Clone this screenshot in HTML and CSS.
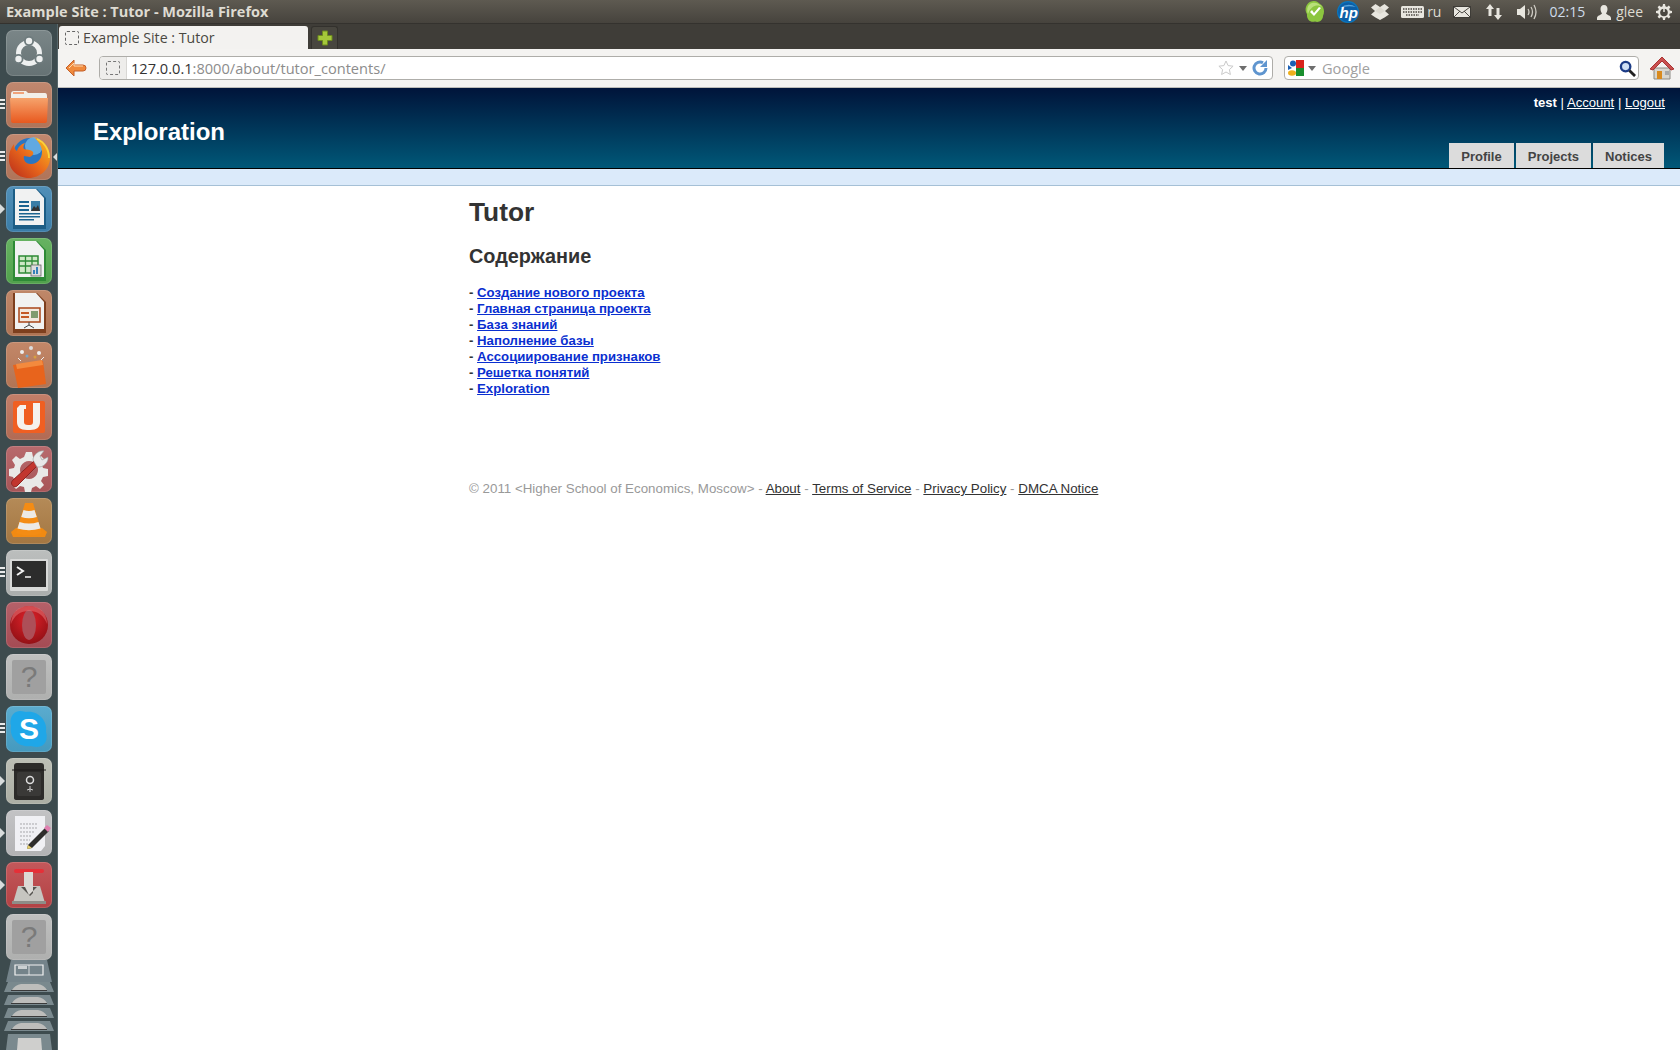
FILE: index.html
```html
<!DOCTYPE html>
<html lang="ru">
<head>
<meta charset="utf-8">
<title>Example Site : Tutor - Mozilla Firefox</title>
<link rel="stylesheet" href="styles.css">
</head>
<body>
<header class="panel">
  <div class="panel-title">Example Site : Tutor - Mozilla Firefox</div>
  <div class="tray">
    <svg class="ti w20" viewBox="0 0 20 22"><path d="M6 .5c4-1.500 7 .5 9 2.500 4 2 5 8 3 12 0 4-4 7-8 5.500C5 22 1.500 18 2 13-1 9 1 2.500 6 .5z" fill="#8cc63f"/><path d="M3 13C1 8 3 3 7 2c4-1 8 1 10 4-4-3-11-2-14 7z" fill="#b9e07a"/><path d="M5 11l4 4 7-8-2-1-5 6-2-3z" fill="#fff"/></svg>
    <svg class="ti w22" viewBox="0 0 22 22"><circle cx="11" cy="11" r="11" fill="#0a76bd"/><circle cx="11" cy="11" r="9.800" fill="#0c5ea6"/><path d="M3 7q8-6 16-1-8-2-16 1z" fill="#5aa6dc"/><text class="hp" x="2.500" y="16.500">hp</text></svg>
    <svg class="ti w18" viewBox="0 0 18 16"><path d="M0 3.500L4.500 0 9 3l4.500-3L18 3.500 14 7l4 3.500-4.500 3L9 16l-4.500-2.500L0 10.500 4 7z" fill="#e8e6df"/><path d="M9 3L4 7l5 3 5-3z" fill="#dcd9d0"/></svg>
    <div class="tray-group g3">
      <svg class="ti w23" viewBox="0 0 23 12"><rect width="23" height="12" rx="1.500" fill="#e8e6df"/><path d="M2 3h19M2 6h19M5 9h13" stroke="#4b4842" stroke-width="1.400" stroke-dasharray="1.500 1"/></svg>
      <span class="tray-text">ru</span>
    </div>
    <svg class="ti w18" viewBox="0 0 18 12"><rect x=".5" y=".5" width="17" height="11" fill="#e8e6df" stroke="#3e3c37"/><path d="M1 1l8 6 8-6M1 11l6-6M17 11l-6-6" fill="none" stroke="#4b4842"/></svg>
    <svg class="ti w18 m2" viewBox="0 0 18 16"><path d="M5 0l4 5H6.500v7h-3V5H1zM13 16l4-5h-2.500V4h-3v7H9z" fill="#e8e6df"/></svg>
    <svg class="ti w20 m2" viewBox="0 0 20 16"><path d="M0 5h3l5-4v14l-5-4H0z" fill="#e8e6df"/><path d="M11 5q2 3 0 6M14 3q3 5 0 10M17 1q4 7 0 14" fill="none" stroke="#cfccc4" stroke-width="1.300"/></svg>
    <span class="tray-text clock">02:15</span>
    <div class="tray-group g5">
      <svg class="ti w14" viewBox="0 0 14 15"><path d="M7 0c2.500 0 3.500 2 3.500 4S9.500 7.500 9 8.500c1 1.500 5 2 5 4.500v2H0v-2c0-2.500 4-3 5-4.500C4.500 7.500 3.500 6 3.500 4S4.500 0 7 0z" fill="#e8e6df"/></svg>
      <span class="tray-text">glee</span>
    </div>
    <svg class="ti w16 gear" viewBox="0 0 16 16"><path d="M7 0h2l.4 2.200 1.600.7L12.800 1.600l1.600 1.600-1.300 1.800.7 1.600L16 7v2l-2.200.4-.7 1.600 1.300 1.800-1.600 1.600-1.800-1.300-1.600.7L9 16H7l-.4-2.200-1.600-.7-1.800 1.300-1.600-1.600L2.900 11l-.7-1.600L0 9V7l2.200-.4.7-1.600L1.600 3.200l1.600-1.600L5 2.900l1.600-.7z" fill="#e8e6df"/><circle cx="8" cy="8.500" r="3.800" fill="#4a4740"/><path d="M8 4v4" stroke="#e8e6df" stroke-width="1.500"/></svg>
  </div>
</header>
<div class="main">
  <nav class="launcher">
    <div class="tile t-dash"><svg viewBox="0 0 46 46"><circle cx="23" cy="23" r="10.500" fill="none" stroke="#eef0f0" stroke-width="5"/><circle cx="23" cy="11" r="5" fill="#6f7c7e"/><circle cx="12.500" cy="29" r="5" fill="#6f7c7e"/><circle cx="33.500" cy="29" r="5" fill="#6f7c7e"/><circle cx="23" cy="11" r="3.200" fill="#eef0f0"/><circle cx="12.500" cy="29" r="3.200" fill="#eef0f0"/><circle cx="33.500" cy="29" r="3.200" fill="#eef0f0"/></svg></div>
    <div class="tile t-orange pips"><svg viewBox="0 0 46 46"><path d="M5 12q0-3 3-3h12l2 2h17q2 0 2 3v4H5z" fill="#f2efe9"/><path d="M7 11h11" stroke="#f08a55" stroke-width="1.500"/><path d="M4 16h38l-1 23q0 2-3 2H8q-3 0-3-2z" fill="url(#fold)"/></svg></div>
    <div class="tile t-orange pips active"><svg viewBox="0 0 46 46"><circle cx="24" cy="21" r="17" fill="#2a76c2"/><circle cx="28" cy="12" r="9" fill="#6fb6e8" opacity=".8"/><path d="M28 3c9 3 16 10 16 21 0 11-10 20-21 20C11 44 2 35 3 23c0-5 2-9 5-13 0 3 1 6 3 7 1-4 4-7 8-8-2 3-2 5-1 6 2 1 7 0 9 3 1 2-1 4-3 5l-6-1c-1 3 1 8 7 8 7 0 11-6 11-12 0-6-4-11-8-15z" fill="url(#fox)"/><path d="M31 5c7 3 12 10 12 19" fill="none" stroke="#fbd23a" stroke-width="1.800"/></svg></div>
    <div class="tile t-blue pipr"><svg viewBox="0 0 46 46"><path d="M7 3h24l9 9v31H7z" fill="#1c5d85"/><path d="M9 3h21l8 9v27H9z" fill="#f1f2f2"/><path d="M13 15h10v2H13zM13 19h10v2H13zM13 23h10v2H13zM13 27h21v1.500H13zM13 30h21v1.500H13zM13 33h15v1.500H13z" fill="#1c6490"/><rect x="25" y="15" width="9" height="10" fill="#3b7da6"/><path d="M25 25l3-5 2 2 2-3 2 6z" fill="#333"/></svg></div>
    <div class="tile t-green"><svg viewBox="0 0 46 46"><path d="M7 3h24l9 9v31H7z" fill="#2e8a36"/><path d="M9 3h21l8 9v27H9z" fill="#f1f2f2"/><rect x="13" y="18" width="19" height="17" fill="#cfe8c6" stroke="#2e8a36" stroke-width="1.500"/><path d="M13 23h19M13 28h19M19.500 18v17M26 18v17" stroke="#2e8a36" stroke-width="1.300"/><rect x="25" y="27" width="10" height="11" fill="#ddd" stroke="#666" stroke-width=".8"/><path d="M27 36v-4h2v4zM30 36v-7h2v7z" fill="#3680b8"/></svg></div>
    <div class="tile t-brown"><svg viewBox="0 0 46 46"><path d="M7 3h24l9 9v31H7z" fill="#7d3f1e"/><path d="M9 3h21l8 9v27H9z" fill="#f1f2f2"/><rect x="13" y="18" width="21" height="14" fill="#f2e9df" stroke="#a9461a" stroke-width="1.500"/><path d="M15 22h8v2h-8zM15 26h8v2h-8z" fill="#c55a25"/><rect x="25" y="21" width="7" height="7" fill="#7f9c6f"/><path d="M23 32v3l-5 3M23 35l5 3" stroke="#444" fill="none"/></svg></div>
    <div class="tile t-store"><svg viewBox="0 0 46 46"><path d="M7 23l30-4 3 23-28 4z" fill="#e8641c"/><path d="M10 22l26-4 1 5-26 4z" fill="#f38a3e"/><circle cx="16" cy="10" r="2" fill="#eee"/><circle cx="25" cy="6" r="2" fill="#ddd"/><circle cx="33" cy="11" r="2" fill="#eee"/><circle cx="21" cy="14" r="1.500" fill="#7aa7c7"/><circle cx="29" cy="15" r="1.500" fill="#d8a040"/><path d="M12 16l3 3M38 15l-3 3" stroke="#eee"/></svg></div>
    <div class="tile t-ubuntuone"><svg viewBox="0 0 46 46"><rect x="7" y="7" width="32" height="32" rx="2" fill="#f05f22"/><path d="M14 11h6v4h-2v13c0 2 1 3 4 3h2c2 0 3-1 3-3V9h7v19c0 5-3 8-10 8h-3c-7 0-10-3-10-8V14z" fill="#f5f2ee"/></svg></div>
    <div class="tile t-red"><svg viewBox="0 0 46 46"><path fill-rule="evenodd" d="M20 6h6l1 5 4 2 4-3 4 4-3 5 1 3 5 1v7l-5 1-2 4 3 4-4 4-4-3-4 2-1 4h-6l-1-5-4-1-4 3-4-4 3-4-2-4-4-1v-7l5-1 1-3-3-5 4-4 4 3 4-2zM23 15a9 9 0 1 0 .01 0z" fill="#e9e9e7"/><path d="M7 40c-2-2-2-4 0-6L28 15l4 4L11 40c-1 1-3 1-4 0z" fill="#c2362f" stroke="#8e2420"/><path d="M27 14c0-5 6-10 11-9l-4 5 2 4 6-3c1 5-5 11-11 10z" fill="#e8e8e8" stroke="#999" stroke-width=".6"/></svg></div>
    <div class="tile t-vlc"><svg viewBox="0 0 46 46"><path d="M5 34l5-4h26l5 4-2 5H7z" fill="#f18a12"/><path d="M19 5h8l9 30q-13 5-26 0z" fill="#f48c14"/><path d="M17.500 12q5.500 2 11 0l2.300 7q-7.800 2.500-15.600 0zM13.500 24q9.500 3 19 0l2 6.500q-11.500 3.500-23 0z" fill="#eceae6"/></svg></div>
    <div class="tile t-term pips"><svg viewBox="0 0 46 46"><rect x="4" y="9" width="38" height="32" rx="1" fill="#d8d9d8"/><rect x="6" y="11" width="34" height="26" fill="#2c2c2c"/><path d="M11 17l6 4-6 4" fill="none" stroke="#f2f2f2" stroke-width="2"/><path d="M19 27h6" stroke="#f2f2f2" stroke-width="1.500"/></svg></div>
    <div class="tile t-opera"><svg viewBox="0 0 46 46"><circle cx="23" cy="23" r="19" fill="url(#op)"/><ellipse cx="23" cy="23" rx="7" ry="15" fill="#ad4f58"/><path d="M5 22Q6 4 23 4t18 18Q36 9 23 9T5 22z" fill="#ee7d80" opacity=".5"/></svg></div>
    <div class="tile t-grey"><svg viewBox="0 0 46 46"><rect x="6" y="6" width="34" height="34" rx="2" fill="#a0a0a0"/><text class="qm" x="23" y="33">?</text></svg></div>
    <div class="tile t-skype pips"><svg viewBox="0 0 46 46"><path d="M14 5c3 0 5 1 6 1 12-2 22 9 20 20 2 6 0 15-9 15-3 0-5-1-6-1C13 42 3 32 5 20 3 14 6 5 14 5z" fill="#1fa7e8"/><text class="skype" x="23" y="33">S</text></svg></div>
    <div class="tile t-safe pipr"><svg viewBox="0 0 46 46"><path d="M8 8q0-3 3-3h24q3 0 3 3v32q0 2-3 2H11q-3 0-3-2z" fill="#2c2b29"/><path d="M6 12h34" stroke="#1c1b1a"/><rect x="11" y="14" width="24" height="24" rx="2" fill="#3a3937"/><circle cx="24" cy="22" r="3.500" fill="none" stroke="#ddd" stroke-width="1.500"/><path d="M24 28v6M21 32l3-1 3 1" stroke="#ccc"/></svg></div>
    <div class="tile t-notes pipr"><svg viewBox="0 0 46 46"><path d="M9 6h30v30l-4 5H9z" fill="#f0f0f4"/><path d="M14 14h18M14 18h18M14 22h14M14 26h12M14 30h10M14 34h8" stroke="#a7a7ab" stroke-dasharray="2 1"/><path d="M22 35l17-17 4 3-17 17-5 1z" fill="#2e2d2c"/><path d="M38 18l3-3 4 3-3 4z" fill="#e07fb0"/><path d="M21 39l1-4 4 3z" fill="#e8cf6a"/></svg></div>
    <div class="tile t-trans pipr"><svg viewBox="0 0 46 46"><path d="M10 7h26q2 0 2 2t-2 2H10q-2 0-2-2t2-2z" fill="#e53038"/><path d="M7 41l5-17h22l5 17z" fill="#c6c5c0"/><path d="M18 10h9v15l4 0-8 8-8-8h3z" fill="#dcdad6"/><path d="M23 33l8-8h-4v6l-3 3zM15 25h4l4 8z" fill="#55534f"/><rect x="6" y="39" width="34" height="3" fill="#8e8d88"/></svg></div>
    <div class="tile t-grey"><svg viewBox="0 0 46 46"><rect x="6" y="6" width="34" height="34" rx="2" fill="#a0a0a0"/><text class="qm" x="23" y="33">?</text></svg></div>
    <svg class="stack" viewBox="0 0 58 90">
      <path d="M11 0h36l5 22H6z" fill="#74838a"/>
      <path d="M15 5h28v10H15z" fill="none" stroke="#f2f2f2" stroke-width="1.200"/><path d="M29 5v10" stroke="#f2f2f2" stroke-width=".8"/><rect x="18" y="6" width="9" height="3" fill="#f2f2f2" opacity=".7"/>
      <path d="M8 22h42l4 10H4z" fill="#7a898e"/><path d="M12 30q3-5 9-6h17q6 1 9 6z" fill="#bdbdbb"/><path d="M11 30h36v1H11z" fill="#3a3a3a"/>
      <path d="M8 35h42l4 10H4z" fill="#7a898e"/><path d="M12 43q3-5 9-6h17q6 1 9 6z" fill="#bdbdbb"/><path d="M11 43h36v1H11z" fill="#3a3a3a"/>
      <path d="M8 48h42l4 10H4z" fill="#7a898e"/><path d="M12 56q3-5 9-6h17q6 1 9 6z" fill="#bdbdbb"/><path d="M11 56h36v1H11z" fill="#3a3a3a"/>
      <path d="M8 61h42l4 10H4z" fill="#7a898e"/><path d="M12 69q3-5 9-6h17q6 1 9 6z" fill="#bdbdbb"/><path d="M11 69h36v1H11z" fill="#3a3a3a"/>
      <path d="M8 74h42l2 16H6z" fill="#7a898e"/><path d="M18 78h23l1 12H17z" fill="#cfcfcd"/>
    </svg>
  </nav>
  <div class="browser">
    <div class="tabbar">
      <div class="tab"><span class="favicon"></span>Example Site : Tutor</div>
      <div class="newtab"><svg viewBox="0 0 16 16" width="16" height="16"><path d="M5.500 1h5v4.500H15v5h-4.500V15h-5v-4.500H1v-5h4.500z" fill="#a5c83a" stroke="#6c8a1e"/></svg></div>
    </div>
    <div class="toolbar">
      <svg class="back" viewBox="0 0 22 18"><path d="M9 1L1 9l8 8v-5h9q3 0 3-3t-3-3H9z" fill="#f08a3c" stroke="#c4602a"/><path d="M4 9l5-5v3h9" fill="none" stroke="#ffd9b0"/></svg>
      <div class="urlbar">
        <span class="urlicon"><span class="favicon"></span></span>
        <span class="url"><span class="url-host">127.0.0.1</span>:8000/about/tutor_contents/</span>
        <svg class="star" viewBox="0 0 16 16" width="16" height="16"><path d="M8 1l2.100 4.600 5 .6-3.700 3.400 1 4.900L8 12l-4.400 2.500 1-4.900L.9 6.200l5-.6z" fill="#fff" stroke="#c9c9c9"/></svg>
        <span class="drop"></span>
        <svg class="reload" viewBox="0 0 16 16" width="16" height="16"><path d="M14 8a6 6 0 1 1-3-5.200" fill="none" stroke="#5f95cf" stroke-width="3"/><path d="M15 0v7H8z" fill="#5f95cf"/></svg>
      </div>
      <div class="searchbar">
        <svg class="gicon" viewBox="0 0 16 16" width="16" height="16"><rect x="8" width="8" height="8" fill="#d8241c"/><rect x="8" y="8" width="8" height="8" fill="#1a8f2e"/><circle cx="5" cy="3.500" r="3" fill="#1a5fb4"/><path d="M0 5l4 3-4 2z" fill="#1a5fb4"/><ellipse cx="4" cy="13" rx="4" ry="2.800" fill="#efb01c"/></svg>
        <span class="drop"></span>
        <span class="search-text">Google</span>
        <svg class="mag" viewBox="0 0 18 18" width="17" height="17"><circle cx="7" cy="7" r="5" fill="#cfe0f5" stroke="#1c3c86" stroke-width="2.500"/><path d="M11 11l6 6" stroke="#222" stroke-width="3"/></svg>
      </div>
      <svg class="home" viewBox="0 0 24 24"><path d="M4 12h16v11H4z" fill="#d9d6cf" stroke="#8c8a84"/><path d="M0 13L12 1l12 12-3 1-9-9-9 9z" fill="#c9504f" stroke="#a33"/><rect x="7" y="15" width="5" height="8" fill="#d98a1e"/><rect x="15" y="15" width="4" height="4" fill="#a8a8a8"/></svg>
    </div>
    <div class="site-header">
      <h2 class="logo">Exploration</h2>
      <div class="site-right">
        <div class="account"><b>test</b> | <a href="#">Account</a> | <a href="#">Logout</a></div>
        <div class="site-tabs"><a href="#">Profile</a><a href="#">Projects</a><a href="#">Notices</a></div>
      </div>
    </div>
    <div class="subbar"></div>
    <main class="content">
      <h1>Tutor</h1>
      <h3>Содержание</h3>
      <ul class="toc">
        <li>- <a href="#">Создание нового проекта</a></li>
        <li>- <a href="#">Главная страница проекта</a></li>
        <li>- <a href="#">База знаний</a></li>
        <li>- <a href="#">Наполнение базы</a></li>
        <li>- <a href="#">Ассоциирование признаков</a></li>
        <li>- <a href="#">Решетка понятий</a></li>
        <li>- <a href="#">Exploration</a></li>
      </ul>
      <footer class="foot">© 2011 &lt;Higher School of Economics, Moscow&gt; - <a href="#">About</a> - <a href="#">Terms of Service</a> - <a href="#">Privacy Policy</a> - <a href="#">DMCA Notice</a></footer>
    </main>
  </div>
</div>
<svg class="defs" width="0" height="0">
  <defs>
    <linearGradient id="fold" x1="0" y1="0" x2="0" y2="1"><stop offset="0" stop-color="#f6a36c"/><stop offset="1" stop-color="#e8591f"/></linearGradient>
    <linearGradient id="fox" x1="1" y1="0" x2="0" y2="1"><stop offset="0" stop-color="#f9c21f"/><stop offset=".5" stop-color="#ea6a1c"/><stop offset="1" stop-color="#b8291a"/></linearGradient>
    <radialGradient id="op" cx=".5" cy=".35" r=".7"><stop offset="0" stop-color="#e0222a"/><stop offset="1" stop-color="#8e0f14"/></radialGradient>
  </defs>
</svg>
</body>
</html>
```
FILE: styles.css
```css
* { box-sizing: border-box; }
html, body { margin: 0; padding: 0; background: #fff; }
body { width: 1680px; height: 1050px; overflow: hidden; font-family: "Liberation Sans", Arial, sans-serif; position: relative; }
.defs { position: absolute; }

.panel { height: 24px; display: flex; align-items: center; justify-content: space-between; background: linear-gradient(#5e5a51, #45423c); padding: 0 8px 0 6px; box-shadow: inset 0 -1px 0 #34322e; }
.panel-title { font: 700 14.5px/22px "Open Sans", "Noto Sans", sans-serif; color: #dedbd2; white-space: nowrap; margin-top: -1px; }
.tray { display: flex; align-items: center; gap: 12px; color: #dfdcd3; }
.tray-group { display: flex; align-items: center; }
.g3 { gap: 3px; }
.g5 { gap: 5px; }
.tray-text { font: 400 14px "Open Sans", "Noto Sans", sans-serif; line-height: 24px; white-space: nowrap; }
.clock { color: #cfdcea; }
.ti { display: block; flex: none; }
.w14 { width: 14px; height: 15px; }
.w16 { width: 16px; height: 16px; }
.w18 { width: 18px; height: 16px; }
.w20 { width: 20px; height: 22px; }
.w22 { width: 22px; height: 22px; }
.w23 { width: 23px; height: 12px; }
.m2 { margin-left: 2px; }
.gear { margin-left: 1px; }
.hp { font: italic 700 15px "Liberation Sans", sans-serif; fill: #fff; }

.main { display: flex; height: 1026px; }
.launcher { width: 58px; flex: none; background: #3d4b4e; display: flex; flex-direction: column; gap: 6px; padding: 6px 0 0 6px; overflow: hidden; border-right: 1px solid #56666a; }
.tile { width: 46px; height: 46px; flex: none; border-radius: 7px; position: relative; box-shadow: inset 0 0 0 1px rgba(255,255,255,.14); }
.tile svg { display: block; width: 46px; height: 46px; border-radius: 7px; background: linear-gradient(rgba(255,255,255,.1), rgba(0,0,0,.05)); }
.t-dash { background: #6b787a; }
.t-orange { background: #b97a5e; }
.t-blue { background: #3d83b0; }
.t-green { background: #55aa50; }
.t-brown { background: #b87a58; }
.t-store { background: #bb7a58; }
.t-ubuntuone { background: #bb7058; }
.t-red { background: #b0595c; }
.t-vlc { background: #ac7d45; }
.t-term { background: #b4b7b6; }
.t-opera { background: #ad4f58; }
.t-grey { background: #b8b9b8; }
.t-skype { background: #48a2c9; }
.t-safe { background: #b5b8ad; }
.t-notes { background: #bcbcbe; }
.t-trans { background: #bc4548; }
.qm { font: 400 30px "Liberation Sans", sans-serif; fill: #7a7a7a; text-anchor: middle; }
.skype { font: 700 30px "Liberation Sans", sans-serif; fill: #fff; text-anchor: middle; }
.pips::before { content: ""; position: absolute; left: -6px; top: 17px; width: 5px; height: 2px; background: #e8eaea; box-shadow: 0 4px 0 #e8eaea, 0 8px 0 #e8eaea; }
.pipr::before { content: ""; position: absolute; left: -6px; top: 18px; border-left: 5px solid #d8dcdc; border-top: 5px solid transparent; border-bottom: 5px solid transparent; }
.active::after { content: ""; position: absolute; right: -6px; top: 18px; border-right: 5px solid #d8dcdc; border-top: 5px solid transparent; border-bottom: 5px solid transparent; }
.stack { width: 58px; height: 90px; flex: none; margin: -6px 0 0 -6px; display: block; }

.browser { flex: 1; display: flex; flex-direction: column; min-width: 0; }
.tabbar { height: 25px; background: #3f3d38; display: flex; align-items: flex-end; gap: 3px; padding-left: 1px; }
.tab { width: 249px; height: 23px; background: #f3f2f0; border-radius: 3px 3px 0 0; font: 400 14.2px "Open Sans", "Noto Sans", sans-serif; color: #4a4842; display: flex; align-items: center; gap: 4px; padding-left: 6px; }
.favicon { display: block; width: 14px; height: 14px; border: 1px dashed #666; border-radius: 2px; flex: none; }
.newtab { width: 27px; height: 23px; background: #48463f; border: 1px solid #33312d; border-bottom: 0; border-radius: 3px 3px 0 0; display: flex; align-items: center; justify-content: center; }
.toolbar { height: 39px; background: #f4f3f1; border-bottom: 1px solid #bdbcb8; display: flex; align-items: center; padding: 0 7px; }
.back { width: 22px; height: 18px; flex: none; margin-right: 12px; }
.urlbar { width: 1174px; height: 24px; background: #fff; border: 1px solid #aeada9; border-radius: 4px; display: flex; align-items: center; flex: none; overflow: hidden; }
.urlicon { width: 27px; height: 100%; background: #eeedeb; border-right: 1px solid #d8d7d4; display: flex; align-items: center; justify-content: center; }
.urlicon .favicon { border-color: #777; }
.url { flex: 1; font: 400 14.6px "Open Sans", "Noto Sans", sans-serif; color: #8c8c8c; padding-left: 4px; white-space: nowrap; }
.url-host { color: #333; }
.star { flex: none; margin-right: 5px; }
.drop { display: block; flex: none; width: 0; height: 0; border-top: 5px solid #6e6e6e; border-left: 4px solid transparent; border-right: 4px solid transparent; margin-right: 5px; }
.reload { flex: none; margin-right: 4px; }
.searchbar { width: 355px; height: 24px; margin-left: 11px; background: #fff; border: 1px solid #aeada9; border-radius: 4px; display: flex; align-items: center; flex: none; padding: 0 2px 0 3px; }
.gicon { flex: none; margin-right: 4px; }
.searchbar .drop { margin-right: 6px; }
.search-text { flex: 1; font: 400 14.6px "Open Sans", "Noto Sans", sans-serif; color: #a0a0a0; }
.mag { flex: none; }
.home { width: 24px; height: 24px; margin-left: 11px; flex: none; }

.site-header { height: 81px; background: linear-gradient(#00143a, #005878); border-bottom: 1px solid #000; display: flex; justify-content: space-between; padding: 0 15px 0 35px; color: #fff; }
.logo { margin: 30px 0 0; font-size: 24px; line-height: 28px; font-weight: 700; }
.site-right { display: flex; flex-direction: column; align-items: flex-end; justify-content: space-between; }
.account { font-size: 13.1px; line-height: 15px; margin-top: 7px; }
.account a { color: #fff; }
.site-tabs { display: flex; gap: 2px; padding-right: 1px; }
.site-tabs a { display: block; height: 25px; padding: 0 12px; background: #dcdcdc; color: #444; font-size: 13px; font-weight: 700; line-height: 27px; text-decoration: none; }
.subbar { height: 17px; background: #dbeafa; border-bottom: 1px solid #a5c0d6; }
.content { padding: 11px 0 0 411px; color: #333; }
.content h1 { margin: 0; font-size: 26.300px; line-height: 30px; font-weight: 700; }
.content h3 { margin: 17px 0 0; font-size: 19.850px; line-height: 24px; font-weight: 700; }
.toc { list-style: none; margin: 17px 0 0; padding: 0; font-size: 13.200px; line-height: 16px; font-weight: 700; }
.toc a { color: #0a2fd0; }
.foot { margin-top: 84px; font-size: 13.350px; line-height: 16px; color: #999; }
.foot a { color: #333; }
```
